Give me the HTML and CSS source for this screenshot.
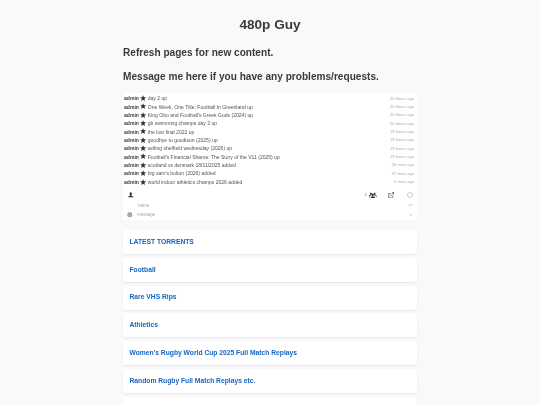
FILE: index.html
```html
<!DOCTYPE html>
<html lang="en">
<head>
<meta charset="utf-8">
<title>480p Guy</title>
<link rel="stylesheet" href="styles.css">
</head>
<body>
<main class="page">
  <h1 class="title">480p Guy</h1>
  <p class="note">Refresh pages for new content.</p>
  <p class="note">Message me here if you have any problems/requests.</p>
  <section class="chat">
    <ul class="log">
      <li class="row"><b>admin</b><svg class="star" viewBox="0 0 10 10"><path d="M5 .3 6.4 3.5 9.8 3.8 7.2 6.1 8 9.6 5 7.8 2 9.6 2.8 6.1.2 3.8 3.6 3.5z"/></svg><span class="msg">day 2 up</span><time>20 hours ago</time></li>
      <li class="row"><b>admin</b><svg class="star" viewBox="0 0 10 10"><path d="M5 .3 6.4 3.5 9.8 3.8 7.2 6.1 8 9.6 5 7.8 2 9.6 2.8 6.1.2 3.8 3.6 3.5z"/></svg><span class="msg">One Week, One Title: Football In Greenland up</span><time>20 hours ago</time></li>
      <li class="row"><b>admin</b><svg class="star" viewBox="0 0 10 10"><path d="M5 .3 6.4 3.5 9.8 3.8 7.2 6.1 8 9.6 5 7.8 2 9.6 2.8 6.1.2 3.8 3.6 3.5z"/></svg><span class="msg">King Otto and Football's Greek Gods (2024) up</span><time>20 hours ago</time></li>
      <li class="row"><b>admin</b><svg class="star" viewBox="0 0 10 10"><path d="M5 .3 6.4 3.5 9.8 3.8 7.2 6.1 8 9.6 5 7.8 2 9.6 2.8 6.1.2 3.8 3.6 3.5z"/></svg><span class="msg">gb swimming champs day 3 up</span><time>20 hours ago</time></li>
      <li class="row"><b>admin</b><svg class="star" viewBox="0 0 10 10"><path d="M5 .3 6.4 3.5 9.8 3.8 7.2 6.1 8 9.6 5 7.8 2 9.6 2.8 6.1.2 3.8 3.6 3.5z"/></svg><span class="msg">the lost final 2022 up</span><time>19 hours ago</time></li>
      <li class="row"><b>admin</b><svg class="star" viewBox="0 0 10 10"><path d="M5 .3 6.4 3.5 9.8 3.8 7.2 6.1 8 9.6 5 7.8 2 9.6 2.8 6.1.2 3.8 3.6 3.5z"/></svg><span class="msg">goodbye to goodison (2025) up</span><time>19 hours ago</time></li>
      <li class="row"><b>admin</b><svg class="star" viewBox="0 0 10 10"><path d="M5 .3 6.4 3.5 9.8 3.8 7.2 6.1 8 9.6 5 7.8 2 9.6 2.8 6.1.2 3.8 3.6 3.5z"/></svg><span class="msg">selling sheffield wednesday (2026) up</span><time>19 hours ago</time></li>
      <li class="row"><b>admin</b><svg class="star" viewBox="0 0 10 10"><path d="M5 .3 6.4 3.5 9.8 3.8 7.2 6.1 8 9.6 5 7.8 2 9.6 2.8 6.1.2 3.8 3.6 3.5z"/></svg><span class="msg">Football's Financial Shame: The Story of the V11 (2025) up</span><time>19 hours ago</time></li>
      <li class="row"><b>admin</b><svg class="star" viewBox="0 0 10 10"><path d="M5 .3 6.4 3.5 9.8 3.8 7.2 6.1 8 9.6 5 7.8 2 9.6 2.8 6.1.2 3.8 3.6 3.5z"/></svg><span class="msg">scotland vs denmark 18/11/2025 added</span><time>58 mins ago</time></li>
      <li class="row"><b>admin</b><svg class="star" viewBox="0 0 10 10"><path d="M5 .3 6.4 3.5 9.8 3.8 7.2 6.1 8 9.6 5 7.8 2 9.6 2.8 6.1.2 3.8 3.6 3.5z"/></svg><span class="msg">big sam's bolton (2026) added</span><time>37 mins ago</time></li>
      <li class="row"><b>admin</b><svg class="star" viewBox="0 0 10 10"><path d="M5 .3 6.4 3.5 9.8 3.8 7.2 6.1 8 9.6 5 7.8 2 9.6 2.8 6.1.2 3.8 3.6 3.5z"/></svg><span class="msg">world indoor athletics champs 2026 added</span><time>5 mins ago</time></li>
    </ul>
    <div class="toolbar">
      <svg class="ico-user" viewBox="0 0 10 10"><path d="M5 .5C6.5.5 7.2 1.800 7 3.500 6.900 4.500 6.500 5.200 6 5.600V6.400L9.500 8V9.500H.5V8L4 6.400V5.600C3.500 5.200 3.100 4.500 3 3.500 2.800 1.800 3.500.5 5 .5Z"/></svg>
      <span class="count">1</span>
      <svg class="ico-users" viewBox="0 0 12 10"><path d="M3 .8C4.200.8 4.700 1.800 4.500 3 4.400 3.700 4 4.300 3.700 4.500V5L1 6.300V8H0V5.500L2.300 4.500C2 4.300 1.600 3.700 1.500 3 1.300 1.800 1.800.8 3 .8ZM9 .8C10.200.8 10.700 1.800 10.500 3 10.400 3.700 10 4.300 9.700 4.500L12 5.500V8H11V6.300L8.300 5V4.500C8 4.300 7.600 3.700 7.500 3 7.300 1.800 7.800.8 9 .8ZM6 2.500C7.200 2.500 7.800 3.500 7.600 4.700 7.500 5.400 7.100 6 6.800 6.200V6.800L9.500 7.800V9.800H2.500V7.800L5.200 6.800V6.200C4.900 6 4.500 5.400 4.400 4.700 4.200 3.500 4.800 2.500 6 2.500Z"/></svg>
      <svg class="ico-popout" viewBox="0 0 10 10"><path class="line" d="M7.500 5.500V9H1V2.500H4.500"/><path class="line" d="M3.500 6.500 8.500 1.500"/><path d="M6 .5H9.500V4Z"/></svg>
      <span class="ring"></span>
    </div>
    <div class="field">
      <span class="name">name</span>
      <svg class="ico-enter" viewBox="0 0 10 8"><path d="M9.500 1V4H2M4 2 1.500 4 4 6"/></svg>
    </div>
    <div class="field">
      <svg class="ico-smile" viewBox="0 0 10 10"><circle cx="5" cy="5" r="4.500"/><circle class="eye" cx="3.500" cy="4" r=".7"/><circle class="eye" cx="6.500" cy="4" r=".7"/><path class="mouth" d="M2.800 6.200C3.800 7.500 6.200 7.500 7.200 6.200"/></svg>
      <span class="message">message</span>
      <svg class="ico-send" viewBox="0 0 6 8"><path d="M1 1 5 4 1 7Z"/></svg>
    </div>
  </section>
  <nav class="cards">
    <a class="card" href="#">LATEST TORRENTS</a>
    <a class="card" href="#">Football</a>
    <a class="card" href="#">Rare VHS Rips</a>
    <a class="card" href="#">Athletics</a>
    <a class="card" href="#">Women's Rugby World Cup 2025 Full Match Replays</a>
    <a class="card" href="#">Random Rugby Full Match Replays etc.</a>
    <a class="card" href="#" aria-label="More"></a>
  </nav>
</main>
</body>
</html>
```
FILE: styles.css
```css
html, body {
  margin: 0;
  padding: 0;
  height: 405px;
  overflow: hidden;
  background: #f9f9fb;
}

body {
  font-family: "Liberation Sans", Arial, sans-serif;
  color: #333;
}

.page {
  width: 294px;
  margin: 0 auto;
  padding-top: 16px;
  filter: blur(.3px);
}

.title {
  margin: 0 0 13px;
  font-size: 13.600px;
  line-height: 17px;
  text-align: center;
  color: #3a3a3a;
}

.note {
  margin: 0 0 11.300px;
  font-size: 10.100px;
  line-height: 13px;
  font-weight: bold;
  color: #3a3a3a;
}

.chat {
  height: 126.500px;
  margin-top: -1.600px;
  box-sizing: border-box;
  padding: 1px 3px 0 1px;
  background: #fff;
  border-radius: 2px;
}

.log {
  list-style: none;
  margin: 0;
  padding: 0;
}

.row {
  display: flex;
  align-items: center;
  height: 8.350px;
  font-size: 5.050px;
  color: #555;
  white-space: nowrap;
}

.row b {
  color: #3a3a3a;
}

.star {
  width: 6.200px;
  height: 6.200px;
  margin: 0 2px 0 .7px;
  fill: #333;
}

.msg {
  flex: 1;
}

.row time {
  font-size: 4.100px;
  color: #aaa;
}

.toolbar {
  display: flex;
  align-items: center;
  height: 11px;
  margin-top: 3.650px;
  padding-left: 4px;
}

.toolbar svg {
  flex: none;
}

.ico-user {
  width: 5.500px;
  height: 5.500px;
  fill: #333;
  margin-right: auto;
}

.count {
  font-size: 4.100px;
  color: #666;
  margin-right: 2px;
}

.ico-users {
  width: 7.500px;
  height: 6.500px;
  fill: #333;
  margin-right: 11px;
}

.ico-popout {
  width: 6.500px;
  height: 6.500px;
  fill: #444;
  margin-right: 12.500px;
}

.line {
  fill: none;
  stroke: #444;
  stroke-width: 1;
}

.ring {
  width: 4.500px;
  height: 4.500px;
  border: 0.500px solid #ccc;
  border-radius: 50%;
  margin-right: 1px;
}

.field {
  display: flex;
  align-items: center;
  height: 9.500px;
  padding-left: 3px;
  font-size: 4.500px;
  color: #aaa;
}

.name {
  margin-left: 11px;
  margin-right: auto;
}

.message {
  margin-left: 4.500px;
  margin-right: auto;
}

.ico-enter {
  width: 5.500px;
  height: 4.500px;
  fill: none;
  stroke: #bbb;
  stroke-width: 1;
  margin-right: 1px;
}

.ico-smile {
  width: 5.500px;
  height: 5.500px;
  fill: #999;
}

.ico-smile .eye {
  fill: #fff;
}

.mouth {
  fill: none;
  stroke: #fff;
  stroke-width: .8;
}

.ico-send {
  width: 2.500px;
  height: 3.500px;
  fill: #bbb;
  margin-right: 2px;
}

.cards {
  display: flex;
  flex-direction: column;
  gap: 3.750px;
  margin-top: 10.500px;
}

.card {
  display: flex;
  align-items: center;
  box-sizing: border-box;
  height: 24px;
  padding: 0 0 1.500px 6.500px;
  background: #fff;
  border-radius: 2.500px;
  box-shadow: 0 1px 2px rgba(0, 0, 0, .08);
  font-size: 6.720px;
  font-weight: bold;
  color: #1565c0;
  text-decoration: none;
}
```
